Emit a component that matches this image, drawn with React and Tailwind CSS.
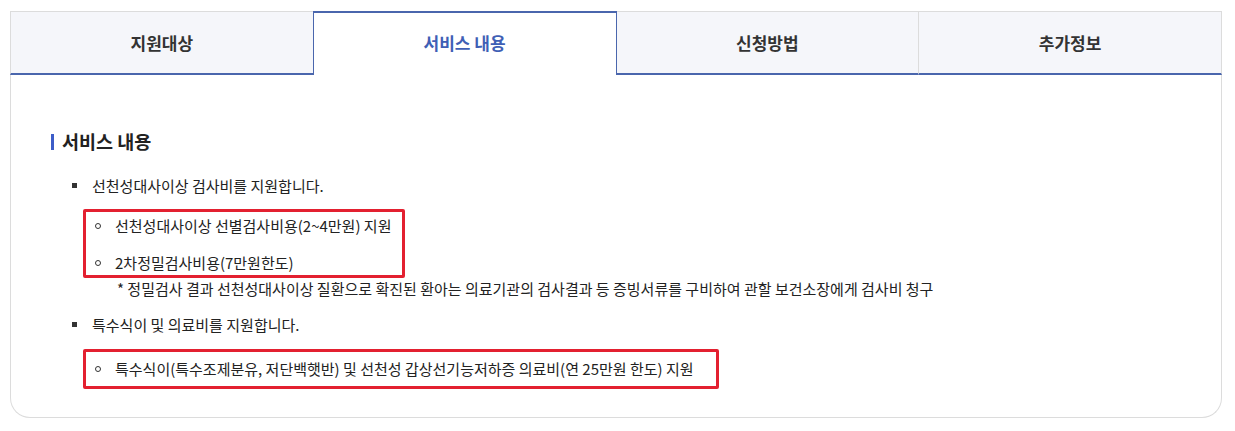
const tabs = ["지원대상", "서비스 내용", "신청방법", "추가정보"];
const active = 1;

function Circle() {
  return <span className="mt-[8px] h-[6px] w-[6px] shrink-0 rounded-full border border-[#333]" />;
}

function SubItem({ children }) {
  return (
    <li className="flex items-start gap-[14px] leading-[22px]">
      <Circle />
      <span>{children}</span>
    </li>
  );
}

function Bullet({ children }) {
  return (
    <div className="flex items-start gap-[15px] pl-[21px] leading-[22px]">
      <span className="mt-[8px] h-[5px] w-[5px] shrink-0 bg-[#333]" />
      <span>{children}</span>
    </div>
  );
}

export default function App() {
  return (
    <div
      className="min-h-[431px] bg-white pl-[10px] pt-[11px] text-[15px] text-[#222]"
      style={{ fontFamily: '"Noto Sans CJK KR", "Noto Sans", sans-serif' }}
    >
      <div className="w-[1212px]">
        <div className="flex">
          {tabs.map((t, i) =>
            i === active ? (
              <div
                key={t}
                className="flex h-[64px] flex-1 items-center justify-center border-x border-t-2 border-[#4a66ad] bg-white pb-[2px] text-[17px] font-bold text-[#3f5fb5]"
              >
                {t}
              </div>
            ) : (
              <div
                key={t}
                className={`flex h-[64px] flex-1 items-center justify-center border-t border-b-2 border-t-[#dcdcdc] border-b-[#4a66ad] bg-[#f5f6fa] text-[17px] font-bold text-[#333] ${
                  i === 0 ? "border-l border-l-[#dcdcdc]" : ""
                } ${i === 2 || i === 3 ? "border-r border-r-[#dcdcdc]" : ""}`}
              >
                {t}
              </div>
            )
          )}
        </div>

        <div className="rounded-b-[20px] border-x border-b border-[#dcdcdc] bg-white pb-[28px] pl-[40px] pt-[54px]">
          <div className="flex h-[26px] items-center gap-[8px]">
            <span className="h-[16px] w-[3px] bg-[#3d5dc8]" />
            <h2 className="text-[18.5px] font-bold text-[#222]">서비스 내용</h2>
          </div>

          <div className="mt-[20px]">
            <Bullet>선천성대사이상 검사비를 지원합니다.</Bullet>
            <ul className="ml-[32px] mt-[12px] w-[322px] rounded-[2px] border-[3px] border-[#e32030] pb-[1px] pl-[9px] pt-[3px]">
              <SubItem>선천성대사이상 선별검사비용(2~4만원) 지원</SubItem>
              <li className="mt-[15px]" />
              <SubItem>2차정밀검사비용(7만원한도)</SubItem>
            </ul>
            <p className="ml-[66px] leading-[22px]">
              * 정밀검사 결과 선천성대사이상 질환으로 확진된 환아는 의료기관의 검사결과 등 증빙서류를 구비하여 관할 보건소장에게 검사비 청구
            </p>
          </div>

          <div className="mt-[14px]">
            <Bullet>특수식이 및 의료비를 지원합니다.</Bullet>
            <ul className="ml-[32px] mt-[13px] w-[636px] rounded-[2px] border-[3px] border-[#e32030] pb-[6px] pl-[9px] pt-[6px]">
              <SubItem>특수식이(특수조제분유, 저단백햇반) 및 선천성 갑상선기능저하증 의료비(연 25만원 한도) 지원</SubItem>
            </ul>
          </div>
        </div>
      </div>
    </div>
  );
}
